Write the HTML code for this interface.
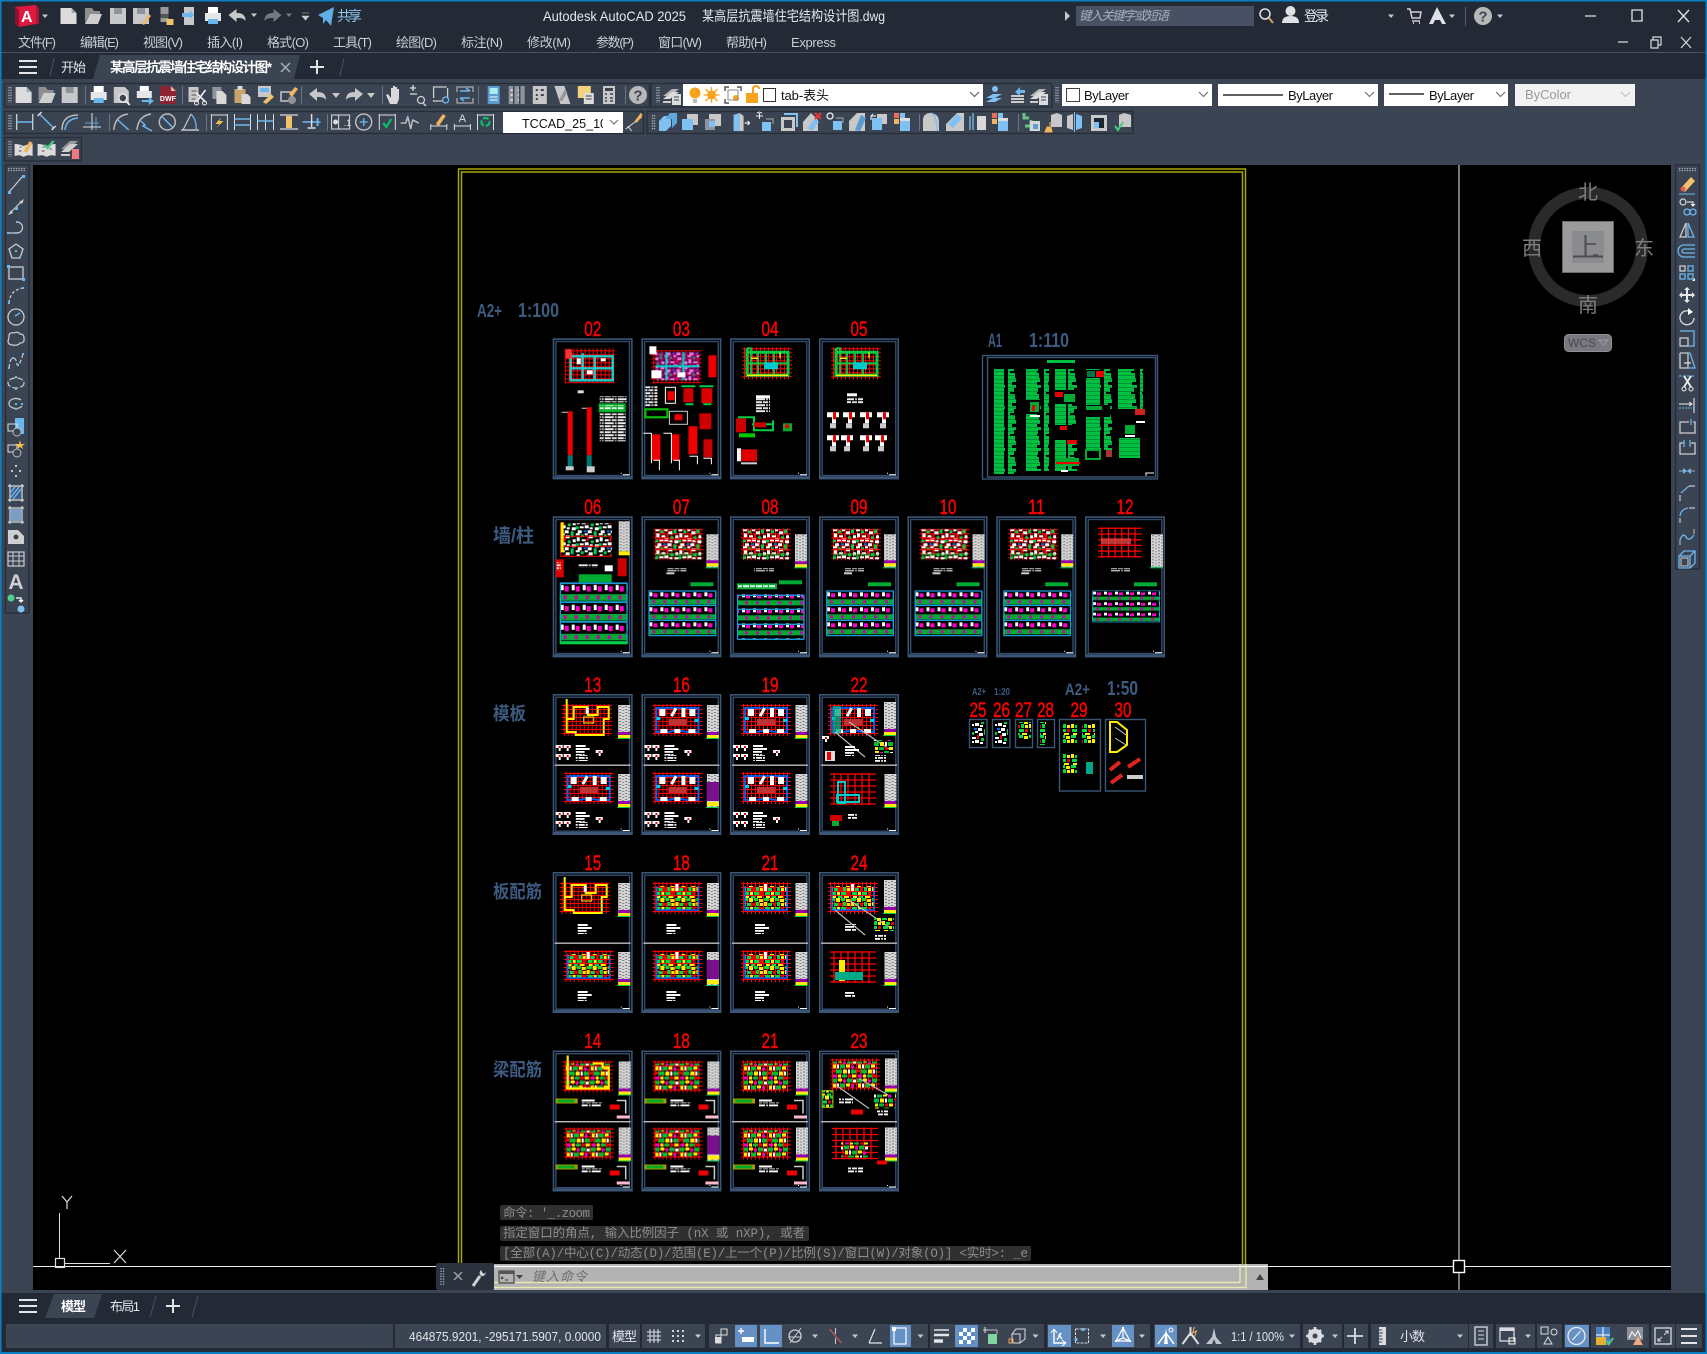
<!DOCTYPE html>
<html lang="zh"><head><meta charset="utf-8"><title>Autodesk AutoCAD 2025</title>
<style>
html,body{margin:0;padding:0;background:#000;width:1707px;height:1354px;overflow:hidden}
svg{display:block;font-family:"Liberation Sans","Noto Sans CJK SC",sans-serif}
.m{font-size:13px;fill:#c9ced6}
.t{font-size:14px;fill:#e4e6ea}
.r{font-size:21px;fill:#f00;stroke:#f00;stroke-width:.45;text-anchor:middle;font-family:"Liberation Sans",sans-serif}
.b{fill:#3d5b80;font-weight:bold}
.c{font-size:13px;fill:#111;font-family:"Liberation Sans","Noto Sans CJK SC",sans-serif}
.h{font-size:12.5px;fill:#8c8c8c;font-family:"Liberation Mono","Noto Sans CJK SC",monospace}
.v{font-size:20px;fill:#7e7e7e;text-anchor:middle}
.st{font-size:13px;fill:#e2e4e8}
</style></head><body>
<svg xmlns="http://www.w3.org/2000/svg" width="1707" height="1354" viewBox="0 0 1707 1354">
<defs>
<pattern id="rg" width="4" height="4" patternUnits="userSpaceOnUse"><path d="M0 .5H4M.5 0V4" stroke="#f00" fill="none"/></pattern>
<pattern id="nD" width="23" height="17" patternUnits="userSpaceOnUse"><g fill="#fff"><rect width="4" height="2"/><rect x="9" width="3" height="2"/><rect x="13" y="2" width="4" height="3"/><rect x="1" y="4" width="3" height="4"/><rect x="6" y="6" width="4" height="2"/><rect x="20" y="6" width="3" height="3"/><rect x="4" y="10" width="4" height="2"/><rect x="9" y="9" width="4" height="3"/><rect x="14" y="11" width="3" height="2"/><rect x="19" y="11" width="4" height="3"/><rect x="2" y="14" width="4" height="3"/><rect x="12" y="14" width="4" height="3"/></g><g fill="#0c4"><rect x="5" y="1" width="3" height="3"/><rect x="18" width="3" height="4"/><rect x="15" y="7" width="3" height="3"/><rect y="10" width="3" height="3"/><rect x="18" y="15" width="3" height="2"/></g><rect x="11" y="4" width="2" height="4" fill="#f00"/><rect x="8" y="14" width="3" height="2" fill="#06f"/></pattern>
<pattern id="nG" width="21" height="15" patternUnits="userSpaceOnUse"><g fill="#0d4"><rect width="5" height="3"/><rect x="11" width="4" height="3"/><rect x="4" y="5" width="4" height="3"/><rect x="13" y="4" width="3" height="4"/><rect x="1" y="9" width="5" height="3"/><rect x="11" y="9" width="5" height="3"/><rect x="8" y="13" width="4" height="2"/></g><g fill="#fe0"><rect x="6" width="4" height="4"/><rect x="16" y="1" width="4" height="3"/><rect y="4" width="3" height="4"/><rect x="17" y="5" width="3" height="3"/><rect x="7" y="9" width="3" height="3"/><rect x="2" y="13" width="4" height="2"/><rect x="14" y="13" width="5" height="2"/></g><g fill="#e00"><rect x="9" y="5" width="3" height="3"/><rect x="17" y="9" width="3" height="3"/></g></pattern>
<pattern id="nH" width="25" height="19" patternUnits="userSpaceOnUse"><g fill="#0b3"><rect width="5" height="4"/><rect x="15" width="5" height="4"/><rect x="8" y="5" width="5" height="4"/><rect x="4" y="10" width="6" height="4"/><rect x="19" y="10" width="5" height="4"/><rect x="10" y="15" width="5" height="3"/></g><g fill="#fe0"><rect x="6" width="4" height="3"/><rect x="1" y="5" width="3" height="4"/><rect x="14" y="5" width="4" height="3"/><rect x="11" y="10" width="4" height="4"/><rect x="6" y="15" width="3" height="3"/><rect x="20" y="15" width="4" height="3"/></g><g fill="#e0c"><rect x="11" y="1" width="3" height="3"/><rect x="19" y="6" width="3" height="3"/><rect x="1" y="15" width="4" height="3"/></g><g fill="#fff"><rect x="21" y="1" width="3" height="3"/><rect x="5" y="5" width="2" height="4"/><rect x="16" y="10" width="2" height="4"/></g><g fill="#e00"><rect y="10" width="4" height="2"/><rect x="16" y="15" width="3" height="3"/></g></pattern>
<pattern id="nT" width="11" height="15" patternUnits="userSpaceOnUse"><rect y="9" width="11" height="5" fill="#0a3"/><rect x="1" y="2" width="3" height="4" fill="#fff"/><rect x="5" y="3" width="4" height="4" fill="#f0c"/><rect x="4" y="10" width="3" height="3" fill="#c0a"/></pattern>
<pattern id="nA" width="16" height="4" patternUnits="userSpaceOnUse"><rect width="16" height="3.4" fill="#00c040"/><rect y="3.4" width="16" height=".6" fill="#00903a"/></pattern>
<pattern id="nAe" width="12" height="21" patternUnits="userSpaceOnUse"><g fill="#000"><rect x="8" y="0" width="4" height="4"/><rect x="4" y="4" width="8" height="3"/><rect x="9" y="7" width="3" height="3"/><rect x="6" y="10" width="6" height="4"/><rect x="2" y="14" width="10" height="2"/><rect x="7" y="16" width="5" height="5"/></g></pattern>
<pattern id="nL" width="6" height="3" patternUnits="userSpaceOnUse"><rect width="6" height="3" fill="#d6d6d6"/><rect x="1" y="1" width="2" height="1" fill="#777"/><rect x="4" y="2" width="2" height="1" fill="#888"/></pattern>
<pattern id="nW" width="13" height="6" patternUnits="userSpaceOnUse"><rect width="9" height="1.800" fill="#fff"/><rect x="10" width="2" height="1.800" fill="#ccc"/><rect y="3" width="6" height="1.800" fill="#fff"/><rect x="7" y="3" width="5" height="1.800" fill="#eee"/></pattern>

<g id="fr"><rect x=".8" y=".8" width="78.400" height="139.400" fill="none" stroke="#3a5575" stroke-width="1.600"/><rect x="3.200" y="3.200" width="73.600" height="134" fill="none" stroke="#324d6c" stroke-width="1.400"/><rect y="138" width="80" height="3" fill="#3a5575"/><path d="M70 136.500h7M68 135h1" stroke="#fff"/></g>
<g id="lg"><rect width="12" height="33" fill="url(#nL)"/><rect y="27" width="12" height="3" fill="#90a"/><rect y="30" width="12" height="3" fill="#fe0"/><rect x="-1" y="33" width="13" height="1" fill="#0c4"/></g>
<g id="lgP"><rect width="12" height="33" fill="url(#nL)"/><rect y="8" width="12" height="19" fill="#7a0e8f"/><rect y="28" width="12" height="4" fill="#fe0"/><rect x="-1" y="33" width="13" height="1" fill="#0c4"/></g>
<g id="tx"><rect width="10" height="2" fill="#fff"/><rect y="3" width="14" height="2" fill="#fff"/><rect y="6" width="9" height="4" fill="url(#nW)"/></g>
<g id="dtl"><path d="M0 0h7v3H5v3H3V3H0z" fill="#fff"/><rect x="3" y="1" width="2" height="2" fill="#e00"/></g>
<g id="pbb"><rect x="-2" y="-1" width="50" height="32" fill="url(#rg)"/></g>
<g id="pD"><use href="#pbb"/><rect width="46" height="30" fill="url(#nD)"/><path d="M0 10H46M0 20H46" stroke="#f00"/><rect x="0" y="24" width="46" height="3" fill="#0c4" opacity=".4"/></g>
<g id="pE"><use href="#pbb"/><path d="M2 3H44V27H32l-4-1H18l-4 1H2z" fill="none" stroke="#06f" stroke-width="1.800"/><rect x="5" y="4" width="6" height="7" fill="#fff"/><rect x="18" y="3" width="3" height="9" fill="#fff" transform="rotate(30 20 7)"/><rect x="27" y="3" width="4" height="9" fill="#fff"/><rect x="35" y="4" width="6" height="7" fill="#fff"/><rect x="14" y="14" width="18" height="6" fill="#b33"/><rect x="6" y="24" width="7" height="4" fill="#fff"/><rect x="20" y="24" width="6" height="4" fill="#fff"/><rect x="34" y="24" width="7" height="4" fill="#fff"/><rect x="2" y="12" width="4" height="3" fill="#0ce"/><rect x="40" y="14" width="4" height="3" fill="#0ce"/></g>
<g id="pF"><use href="#pbb"/><path d="M3-6V27H12V30H40V14H45V2H34V10H24V2H10V14H4" fill="none" stroke="#fe0" stroke-width="2"/><rect x="20" y="12" width="10" height="6" fill="none" stroke="#fe0"/><rect x="22" y="3" width="3" height="6" fill="#fff"/></g>
<g id="pG"><use href="#pbb"/><rect x="2" y="3" width="42" height="24" fill="url(#nG)"/><path d="M2 3v24h42V3" fill="none" stroke="#06f" stroke-width="1.500"/><rect x="21" y="1" width="3" height="7" fill="#fff"/></g>
<g id="pH"><use href="#pbb"/><rect x="1" y="2" width="44" height="26" fill="url(#nH)"/></g>
<g id="pHy"><use href="#pbb"/><rect x="1" y="2" width="44" height="26" fill="url(#nH)"/><path d="M3-6V27H44V6H38V2H28" fill="none" stroke="#fe0" stroke-width="2.200"/></g>
<g id="pC"><use href="#pbb"/><path d="M3 0V27H44V4H3" fill="none" stroke="#0c4" stroke-width="3"/><path d="M3 0h4v27M14 4V27M30 4V27M3 15H44M22 4V15" fill="none" stroke="#0c4" stroke-width="1.800"/><path d="M3 27H44M7 10H14M36 4V10" fill="none" stroke="#fe0" stroke-width="1.300"/><rect x="20" y="14" width="14" height="7" fill="#0cc"/></g>
<g id="pR"><path d="M0 0H46M0 6H46M0 12H46M0 18H46M0 24H46M0 30H46M4 -1V31M11 -1V31M18 -1V31M25 -1V31M32 -1V31M39 -1V31" stroke="#f00" stroke-width="1.300"/></g>
<g id="tbl"><rect width="68" height="46" fill="url(#nT)"/><path d="M.7.7H67.300V45.300H.7zM.7 15H67.300M.7 30H67.300" fill="none" stroke="#1a9ad8" stroke-width="1.300"/></g>

<g id="s02"><use href="#fr"/><rect x="12" y="10" width="50" height="35" fill="url(#rg)"/><path d="M18 15V42H60V18H18M30 15V42M42 18V42M18 30H60" fill="none" stroke="#2cc" stroke-width="2.400"/><rect x="24" y="20" width="4" height="6" fill="#fff"/><rect x="34" y="32" width="6" height="4" fill="#fff"/><rect x="48" y="20" width="5" height="3" fill="#fff"/><rect x="13" y="11" width="6" height="9" fill="#f33"/><rect x="25" y="52" width="6" height="3" fill="#ddd"/><path d="M9 74h8v40M29 70h8v44" fill="none" stroke="#ccc"/><rect x="15" y="73" width="5" height="44" fill="#e00"/><rect x="34" y="69" width="5" height="48" fill="#e00"/><rect x="15" y="117" width="5" height="12" fill="#077"/><rect x="34" y="117" width="5" height="12" fill="#077"/><rect x="46" y="65" width="27" height="9" fill="#0a2"/><rect x="47" y="67" width="24" height="5" fill="url(#nW)"/><rect x="47" y="58" width="27" height="6" fill="url(#nW)"/><rect x="47" y="75" width="26" height="28" fill="url(#nW)"/><rect x="13" y="128" width="8" height="4" fill="#ccc"/><rect x="34" y="128" width="8" height="6" fill="#ccc"/></g>
<g id="s03"><use href="#fr"/><rect x="10" y="12" width="50" height="33" fill="url(#rg)"/><rect x="14" y="14" width="44" height="28" fill="url(#nD)"/><rect x="14" y="14" width="44" height="28" fill="#a0a" opacity=".5"/><path d="M14 28H58M25 14V42M42 14V42" stroke="#0cc" stroke-width="2"/><rect x="8" y="8" width="7" height="8" fill="#fff"/><rect x="10" y="32" width="10" height="8" fill="#fff"/><rect x="36" y="34" width="8" height="5" fill="#fff"/><rect x="67" y="17" width="8" height="22" fill="#e00"/><rect x="4" y="48" width="12" height="20" fill="url(#nW)"/><rect x="24" y="49" width="10" height="16" fill="none" stroke="#fff"/><rect x="26" y="53" width="7" height="9" fill="#e00"/><rect x="42" y="50" width="10" height="14" fill="#c00"/><rect x="60" y="50" width="11" height="15" fill="#d00"/><path d="M40 48h14M58 48h14M44 66h8M62 66h8" stroke="#0c4" stroke-width="2"/><rect x="4" y="71" width="22" height="8" fill="none" stroke="#0c0" stroke-width="2"/><rect x="28" y="73" width="18" height="13" fill="none" stroke="#ccc"/><rect x="33" y="76" width="8" height="6" fill="#e00"/><rect x="58" y="75" width="12" height="16" fill="#c00"/><rect x="10" y="96" width="9" height="26" fill="#e00"/><rect x="30" y="96" width="8" height="26" fill="#e00"/><rect x="47" y="88" width="9" height="28" fill="#e00"/><rect x="62" y="101" width="9" height="18" fill="#c00"/><path d="M2 95h8v30M22 95h8v30M12 122h6v10M32 122h6v10M48 118h8v8M62 120h8v6" fill="none" stroke="#fff"/></g>
<g id="s04"><use href="#fr"/><use href="#pC" transform="translate(14 10)"/><rect x="26" y="57" width="14" height="3" fill="#fff"/><rect x="26" y="60" width="14" height="14" fill="url(#nW)"/><rect x="6" y="80" width="10" height="14" fill="#c00"/><path d="M8 79h16v13H43V82M22 86H43" fill="none" stroke="#0c4" stroke-width="2"/><rect x="24" y="84" width="12" height="5" fill="#c00"/><rect x="9" y="95" width="16" height="4" fill="#0c0"/><rect x="53" y="85" width="9" height="8" fill="#0a3"/><rect x="55" y="86" width="4" height="4" fill="#e00"/><rect x="11" y="111" width="16" height="12" fill="#d00"/><rect x="7" y="110" width="4" height="13" fill="#fff"/><rect x="11" y="124" width="16" height="2" fill="#ccc"/></g>
<g id="s05"><use href="#fr"/><use href="#pC" transform="translate(14 10)"/><rect x="28" y="55" width="10" height="3" fill="#fff"/><rect x="28" y="59" width="16" height="6" fill="url(#nW)"/><use href="#dd5" x="8" y="74"/><use href="#dd5" x="24" y="74"/><use href="#dd5" x="41" y="74"/><use href="#dd5" x="58" y="74"/><use href="#dd5" x="8" y="97"/><use href="#dd5" x="22" y="97"/><use href="#dd5" x="41" y="97"/><use href="#dd5" x="56" y="97"/></g>
<g id="dd5"><path d="M0 0h12v5H9v6H5V5H0z" fill="#fff"/><rect x="6" y="0" width="3" height="7" fill="#e00"/><rect x="3" y="11" width="6" height="5" fill="#ccc"/></g>
<g id="s06"><use href="#fr"/><rect x="8" y="7" width="51" height="33" fill="url(#nD)"/><path d="M8 7v33h51M8 20H59M8 30H59" fill="none" stroke="#f00"/><rect x="8" y="6" width="3" height="30" fill="#fe0"/><rect x="66" y="5" width="11" height="30" fill="url(#nL)"/><rect x="66" y="35" width="11" height="4" fill="#fe0"/><rect x="3" y="43" width="8" height="18" fill="#d00"/><rect x="4" y="46" width="4" height="8" fill="url(#nW)"/><rect x="65" y="42" width="9" height="18" fill="#c00"/><rect x="52" y="49" width="8" height="6" fill="#fff"/><rect x="25" y="48" width="20" height="3" fill="url(#nW)"/><rect x="26" y="58" width="33" height="8" fill="#0a3"/><use href="#tbl" transform="translate(7 66) scale(1 1.320)"/><rect x="7" y="125" width="68" height="3" fill="#0c4"/></g>
<g id="sW"><use href="#fr"/><use href="#pD" transform="translate(14 13)"/><rect x="65" y="18" width="12" height="33" fill="url(#nL)"/><rect x="65" y="44" width="12" height="3" fill="#90a"/><rect x="65" y="47" width="12" height="3" fill="#fe0"/><rect x="64" y="51" width="13" height="1" fill="#0c4"/><rect x="25" y="52" width="20" height="3" fill="url(#nW)"/><rect x="25" y="56" width="8" height="2" fill="#ccc"/><rect x="49" y="66" width="23" height="4" fill="#0a3"/><use href="#tbl" transform="translate(7 74)"/></g>
<g id="s08"><use href="#fr"/><use href="#pD" transform="translate(13 13)"/><use href="#lg" transform="translate(65 18)"/><rect x="24" y="52" width="20" height="3" fill="url(#nW)"/><rect x="49" y="64" width="23" height="4" fill="#0a3"/><rect x="7" y="67" width="40" height="6" fill="#0a3"/><rect x="8" y="68" width="38" height="4" fill="url(#nW)"/><rect x="7" y="78" width="67" height="45" fill="url(#nT)"/><path d="M7.500 79H74M7.500 93H74M7.500 108H74M7.500 123H74M7.500 79V123M74 79V123" fill="none" stroke="#1a9ad8" stroke-width="1.300"/></g>
<g id="s12"><use href="#fr"/><use href="#pR" transform="translate(13 12) scale(.95)"/><rect x="16" y="22" width="30" height="6" fill="#d44" opacity=".8"/><rect x="66" y="18" width="12" height="33" fill="url(#nL)"/><rect x="65" y="51" width="13" height="1" fill="#0c4"/><rect x="25" y="52" width="20" height="3" fill="url(#nW)"/><rect x="49" y="66" width="23" height="4" fill="#0a3"/><g transform="translate(7 74) scale(1 .7)"><rect width="68" height="46" fill="url(#nT)"/><path d="M.7.7H67.300V45.300H.7z" fill="none" stroke="#1a9ad8"/></g></g>
<g id="dvd"><rect x="2" y="70.500" width="76" height="1.400" fill="#bbb"/></g>
<g id="ds"><use href="#dtl" x="3" y="51"/><use href="#dtl" x="11" y="51"/><use href="#dtl" x="3" y="60"/><use href="#dtl" x="11" y="60"/><use href="#tx" x="23" y="51"/><rect x="23" y="61" width="12" height="6" fill="url(#nW)"/><use href="#dtl" x="43" y="56"/></g>
<g id="sT1"><use href="#fr"/><use href="#pF" transform="translate(11 11)"/><use href="#lg" transform="translate(65.500 11)"/><use href="#ds"/><use href="#dvd"/><use href="#pE" transform="translate(13 79)"/><use href="#lg" transform="translate(65.500 80)"/><use href="#ds" y="67"/></g>
<g id="sT2"><use href="#fr"/><use href="#pE" transform="translate(13 11)"/><use href="#lg" transform="translate(65.500 11)"/><use href="#ds"/><use href="#dvd"/><use href="#pE" transform="translate(13 79)"/><use href="#lgP" transform="translate(65.500 80)"/><use href="#ds" y="67"/></g>
<g id="sT3"><use href="#fr"/><use href="#pE" transform="translate(13 11)"/><use href="#lg" transform="translate(65.500 11)"/><use href="#ds"/><use href="#dvd"/><use href="#pE" transform="translate(13 79)"/><use href="#lg" transform="translate(65.500 80)"/><use href="#ds" y="67"/></g>
<g id="sT4"><use href="#fr"/><use href="#pE" transform="translate(11 11)"/><rect x="14" y="12" width="8" height="28" fill="#0a8" opacity=".8"/><use href="#lg" transform="translate(65 8)"/><path d="M16 38L46 63M30 28L70 55" stroke="#bbb" stroke-width="1.200"/><rect x="55" y="46" width="20" height="13" fill="url(#nH)"/><use href="#dtl" x="3" y="42"/><rect x="6" y="57" width="10" height="10" fill="#ddd"/><rect x="8" y="58" width="4" height="8" fill="#e00"/><use href="#tx" x="26" y="52"/><rect x="56" y="61" width="11" height="7" fill="url(#nW)"/><use href="#dvd"/><use href="#pR" transform="translate(11 80)"/><rect x="19" y="88" width="7" height="21" fill="none" stroke="#0cc" stroke-width="2"/><rect x="18" y="101" width="22" height="7" fill="none" stroke="#0cc" stroke-width="2"/><use href="#lg" transform="translate(65.500 80)"/><rect x="11" y="121" width="12" height="6" fill="#c00"/><rect x="13" y="127" width="7" height="5" fill="#0a3"/><rect x="29" y="119" width="9" height="6" fill="url(#nW)"/></g>
<g id="dr"><use href="#tx" x="25" y="52"/></g>
<g id="sS1"><use href="#fr"/><use href="#pF" transform="translate(9 11)"/><use href="#lg" transform="translate(65.500 11)"/><use href="#dr"/><use href="#dvd"/><use href="#pG" transform="translate(13 79)"/><use href="#lg" transform="translate(65.500 80)"/><use href="#dr" y="67"/></g>
<g id="sS2"><use href="#fr"/><use href="#pG" transform="translate(13 11)"/><use href="#lg" transform="translate(65.500 11)"/><use href="#dr"/><use href="#dvd"/><use href="#pG" transform="translate(13 79)"/><use href="#lgP" transform="translate(65.500 80)"/><use href="#dr" y="67"/></g>
<g id="sS3"><use href="#fr"/><use href="#pG" transform="translate(13 11)"/><use href="#lg" transform="translate(65.500 11)"/><use href="#dr"/><use href="#dvd"/><use href="#pG" transform="translate(13 79)"/><use href="#lg" transform="translate(65.500 80)"/><use href="#dr" y="67"/></g>
<g id="sS4"><use href="#fr"/><use href="#pG" transform="translate(11 11)"/><use href="#lg" transform="translate(65 8)"/><path d="M16 38L46 63M30 28L70 55" stroke="#bbb" stroke-width="1.200"/><rect x="55" y="46" width="20" height="13" fill="url(#nG)"/><rect x="26" y="52" width="11" height="8" fill="url(#nW)"/><rect x="56" y="63" width="11" height="6" fill="url(#nW)"/><use href="#dvd"/><use href="#pR" transform="translate(11 80)"/><rect x="20" y="88" width="6" height="21" fill="#fe0"/><rect x="16" y="100" width="28" height="8" fill="#0a8"/><use href="#lg" transform="translate(65.500 80)"/><rect x="26" y="119" width="10" height="6" fill="url(#nW)"/></g>
<g id="bb"><rect x="3" y="48" width="22" height="5" fill="#a90"/><rect x="5" y="49" width="17" height="3" fill="#0a2"/><rect x="29" y="49" width="13" height="2" fill="#fff"/><rect x="29" y="52" width="20" height="5" fill="url(#nW)"/><rect x="57" y="54" width="10" height="5" fill="#e00"/><path d="M64 50h9v13" fill="none" stroke="#ccc" stroke-width="1.500"/><rect x="64" y="65" width="13" height="3" fill="#fbc"/></g>
<g id="sB1"><use href="#fr"/><use href="#pHy" transform="translate(12 11)"/><use href="#lg" transform="translate(66 11)"/><use href="#bb"/><use href="#dvd"/><use href="#pH" transform="translate(13 78)"/><use href="#lg" transform="translate(66 77)"/><use href="#bb" y="66"/></g>
<g id="sB2"><use href="#fr"/><use href="#pH" transform="translate(13 11)"/><use href="#lg" transform="translate(66 11)"/><use href="#bb"/><use href="#dvd"/><use href="#pH" transform="translate(13 78)"/><use href="#lgP" transform="translate(66 77)"/><use href="#bb" y="66"/></g>
<g id="sB3"><use href="#fr"/><use href="#pH" transform="translate(13 11)"/><use href="#lg" transform="translate(66 11)"/><use href="#bb"/><use href="#dvd"/><use href="#pH" transform="translate(13 78)"/><use href="#lg" transform="translate(66 77)"/><use href="#bb" y="66"/></g>
<g id="sB4"><use href="#fr"/><use href="#pH" transform="translate(13 9)"/><use href="#lg" transform="translate(66 8)"/><path d="M16 34L50 58M40 28L70 45" stroke="#bbb" stroke-width="1.200"/><rect x="55" y="44" width="22" height="14" fill="url(#nH)"/><rect x="3" y="40" width="11" height="17" fill="url(#nG)"/><rect x="3" y="40" width="11" height="17" fill="none" stroke="#a90"/><rect x="20" y="47" width="14" height="7" fill="url(#nW)"/><rect x="32" y="59" width="12" height="5" fill="#e00"/><rect x="58" y="60" width="11" height="6" fill="url(#nW)"/><use href="#dvd"/><use href="#pR" transform="translate(13 78)"/><rect x="22" y="92" width="28" height="15" fill="url(#nH)"/><use href="#lg" transform="translate(66 77)"/><rect x="29" y="116" width="15" height="6" fill="url(#nW)"/><rect x="58" y="110" width="10" height="4" fill="#e00"/></g>

<g id="n"><path d="M-8-8H3l5 5V8H-8z" fill="#dcdcdc"/><path d="M3-8v5h5" fill="#9aa" /></g>
<g id="o"><path d="M-8 7V-8h7l2 3H7v3H-3z" fill="#8f8f8f"/><path d="M-8 8l5-10H9L5 8z" fill="#cfcfcf"/></g>
<g id="s"><path d="M-8-8H8V8H-8z" fill="#c8c8c8"/><rect x="-4" y="-8" width="8" height="6" fill="#8f949c"/><rect x="-4" y="2" width="8" height="6" fill="#fff"/><rect x="-4" y="2" width="8" height="6" fill="#3b4453" opacity=".3"/></g>
<g id="sa"><use href="#s"/><path d="M1 8L8-2l2 2L3 9z" fill="#f2b45c"/></g>
<g id="pr"><rect x="-5" y="-9" width="10" height="6" fill="#fff"/><rect x="-8" y="-3" width="16" height="8" fill="#e6e6e6"/><rect x="-5" y="3" width="10" height="5" fill="#6cb6ee"/></g>
<g id="pv"><path d="M-8-8H3l4 4V8H-8z" fill="#c8c8c8"/><circle cx="1" cy="3" r="4" fill="#3b4453" stroke="#e6e6e6" stroke-width="1.500"/><path d="M4 6l4 4" stroke="#e6e6e6" stroke-width="1.800"/></g>
<g id="pl"><rect x="-5" y="-9" width="9" height="5" fill="#fff"/><rect x="-8" y="-4" width="15" height="7" fill="#e6e6e6"/><path d="M-3 5H4V2l5 4-5 4V7H-3z" fill="#6cb6ee"/></g>
<g id="dwf"><path d="M-8-9H3l5 5V9H-8z" fill="#8c2332"/><path d="M3-9v5h5" fill="#eaa"/><text x="0" y="6" font-size="7" fill="#fff" text-anchor="middle" font-weight="bold">DWF</text></g>
<g id="cut"><rect x="-9" y="-8" width="10" height="15" fill="#c8c8c8"/><path d="M-6-4h5M-6 0h5M-6 4h4" stroke="#555"/><path d="M-1-2L8 7M8-5L-1 7" stroke="#eee" stroke-width="1.600"/><circle cx="-1" cy="8" r="2" fill="none" stroke="#eee"/><circle cx="7" cy="8" r="2" fill="none" stroke="#eee"/></g>
<g id="cp"><rect x="-7" y="-8" width="9" height="12" fill="#8f949c"/><path d="M-3-4H3l4 4V9H-3z" fill="#d8d8d8"/></g>
<g id="pa"><rect x="-8" y="-6" width="11" height="14" fill="#c9a26a"/><rect x="-5" y="-9" width="5" height="4" fill="#d8d8d8"/><path d="M-1-1H5L8 2V9H-1z" fill="#d8d8d8"/></g>
<g id="mt"><rect x="-8" y="-9" width="13" height="11" fill="#c8c8c8"/><rect x="-6" y="-7" width="9" height="4" fill="#6cb6ee"/><path d="M-3 7L5-1l3 3L0 9z" fill="#f2c26a"/></g>
<g id="bl"><rect x="-8" y="-3" width="11" height="9" fill="none" stroke="#c8c8c8" stroke-width="1.500"/><circle cx="3" cy="5" r="4" fill="#8f949c"/><path d="M0-1L6-8l3 2L3 2z" fill="#f2b45c"/></g>
<g id="un"><path d="M-9-1l8-6v4c6 0 9 2 9 8-2-3-5-3-9-3v4z" fill="#c8c8c8"/></g>
<g id="rd"><path d="M9-1L1-7v4c-6 0-9 2-9 8 2-3 5-3 9-3v4z" fill="#c8c8c8"/></g>
<g id="tri"><path d="M-4-2H4L0 3z" fill="#c8c8c8"/></g>
<g id="trs"><path d="M-3-1.500H3L0 2z" fill="#c8c8c8"/></g>
<g id="hnd"><path d="M-5 9L-9 0l2-1 3 4V-7h2V-2V-9h2v7V-8h2V-2V-6h2V4l-2 5z" fill="#d8d8d8"/></g>
<g id="zr"><path d="M-8-7H-2M-5-10V-4M-8-1h7" stroke="#ddd" stroke-width="1.300"/><circle cx="3" cy="5" r="3.500" fill="none" stroke="#ccc" stroke-width="1.300"/><path d="M5 8l3 3" stroke="#ccc" stroke-width="1.500"/></g>
<g id="zw"><rect x="-8" y="-8" width="14" height="14" fill="none" stroke="#ccc" stroke-width="1.300" stroke-dasharray="13 2"/><circle cx="4" cy="5" r="3" fill="#3b4453" stroke="#6cb6ee" stroke-width="1.300"/></g>
<g id="zp"><path d="M-8-3V-8H8V-3M-8 3V8H8V3" fill="none" stroke="#aaa" stroke-width="1.300"/><path d="M-5-4H5M5-4L1-7M5 3H-5M-5 3L-1 6" stroke="#6cb6ee" stroke-width="1.500" fill="none"/></g>
<g id="pro"><rect x="-6" y="-9" width="12" height="18" fill="#5b9bd0"/><rect x="-4" y="-7" width="8" height="6" fill="#aee"/><path d="M-4 2H4M-4 5H4" stroke="#fff"/></g>
<g id="tp"><rect x="-8" y="-9" width="16" height="18" fill="#8f949c"/><path d="M-3-9V9M3-9V9" stroke="#3b4453" stroke-width="1.500"/><path d="M-6-5h2M1-5h1M-6 0h2M1 0h1M-6 5h2M1 5h1" stroke="#ddd" stroke-width="2"/></g>
<g id="sh"><rect x="-7" y="-9" width="14" height="18" fill="#c8c8c8"/><path d="M-4-5h2M1-5h3M-4 0h2M1 0h3M-4 4h2" stroke="#3b4453" stroke-width="2"/></g>
<g id="ms"><path d="M-8-9H2l6 18H-2z" fill="#c8c8c8"/><path d="M-4 6L2-5l3 2-5 9z" fill="#999"/></g>
<g id="mk"><rect x="-8" y="-9" width="13" height="12" fill="#f2d27a"/><rect x="-2" y="-2" width="10" height="11" fill="#ddd"/><path d="M0 1H6M0 4H6" stroke="#444"/></g>
<g id="cal"><rect x="-6" y="-9" width="12" height="18" fill="#c8c8c8"/><rect x="-4" y="-7" width="8" height="3" fill="#3b4453"/><path d="M-4-1h2M1-1h3M-4 3h2M1 3h3M-4 6h2M1 6h3" stroke="#3b4453" stroke-width="1.500"/></g>
<g id="q"><circle r="9" fill="#b8b8b8"/><text y="5.500" font-size="15" font-weight="bold" text-anchor="middle" fill="#3b4453">?</text></g>
<g id="lay"><path d="M-9 1L0-6 7-6-2 1z" fill="#b8b8b8"/><path d="M-9 4L0-3 7-3-2 4z" fill="#dcdcdc"/><path d="M-9 7H-1" stroke="#ccc" stroke-width="2"/><rect x="0" y="-1" width="9" height="11" fill="#dcdcdc"/><path d="M2 2h5M2 5h5" stroke="#3b4453"/></g>
<g id="bulb"><circle cy="-2" r="5.500" fill="#f7a41c"/><rect x="-2" y="4" width="4" height="4" fill="#bbb"/></g>
<g id="sun"><circle r="4.500" fill="#f7a41c"/><path d="M-8 0H8M0-8V8M-6-6L6 6M6-6L-6 6" stroke="#f7a41c" stroke-width="1.300"/></g>
<g id="vp"><path d="M-8-4V-8H-4M4-8H8V-4M-8 4V8H-4" fill="none" stroke="#555" stroke-width="1.500"/><circle cx="3" cy="3" r="3" fill="#f7a41c"/><rect x="-5" y="-5" width="10" height="10" fill="none" stroke="#888"/></g>
<g id="lck"><rect x="-6" y="-2" width="12" height="10" fill="#f7a41c"/><path d="M1-2V-6Q1-9 4-9T7-6" fill="none" stroke="#f7a41c" stroke-width="2"/></g>
<g id="lyb"><path d="M-8 7L-1 3 8 3 1 7zM-8 3L-1-1 8-1 1 3z" fill="#7fc1f2"/><circle cx="1" cy="-6" r="3" fill="#7fc1f2"/></g>
<g id="lyp"><path d="M-7 7H6M-7 4H6M-7 1H6" stroke="#ccc" stroke-width="2"/><path d="M-3-3L2-8V-5H7V-2H2V1z" fill="#6cb6ee"/></g>
<g id="dlin"><path d="M-8-8V8M8-8V8" stroke="#dcdcdc" stroke-width="1.200"/><path d="M-8 0H8" stroke="#6cb6ee" stroke-width="1.500"/></g>
<g id="dal"><path d="M-7-8L7 6" stroke="#6cb6ee" stroke-width="1.500"/><path d="M-9-6L-5-10M5 8L9 4" stroke="#ddd" stroke-width="1.500"/></g>
<g id="darc"><path d="M-8 8Q-8-7 8-7" fill="none" stroke="#ccc" stroke-width="1.300"/><path d="M-5 8Q-4-3 8-4" fill="none" stroke="#6cb6ee" stroke-width="1.500"/></g>
<g id="dor"><path d="M-9 5H9M0-9V8" stroke="#ddd" stroke-width="1"/><path d="M-7 1H7M4-5V8" stroke="#6cb6ee" stroke-width="1" opacity=".8"/></g>
<g id="drad"><path d="M-8 8Q-7-6 6-8" fill="none" stroke="#bbb" stroke-width="1.500"/><path d="M-4-2L7 8" stroke="#6cb6ee" stroke-width="1.500"/></g>
<g id="djog"><path d="M-8 8Q-7-6 6-8" fill="none" stroke="#bbb" stroke-width="1.500"/><path d="M-4-1L0 3-2 4 7 9" fill="none" stroke="#6cb6ee" stroke-width="1.500"/></g>
<g id="ddia"><circle r="8" fill="none" stroke="#bbb" stroke-width="1.500"/><path d="M-5-5L5 5" stroke="#6cb6ee" stroke-width="1.500"/></g>
<g id="dang"><path d="M-9 8H9" stroke="#ddd" stroke-width="1.300"/><path d="M-7 8L1-8" stroke="#ddd"/><path d="M1-8Q7-2 6 8" fill="none" stroke="#6cb6ee" stroke-width="1.300"/></g>
<g id="dqk"><path d="M-8-8V8M8-8V8M-8-7H8" stroke="#ddd"/><path d="M2-5L-4 2H0L-3 6 4-1H0z" fill="#f5c04a"/></g>
<g id="dbas"><path d="M-8-8V8M8-8V8" stroke="#ddd"/><path d="M-8-3H8M-8 3H8" stroke="#6cb6ee" stroke-width="1.500"/></g>
<g id="dcon"><path d="M-8-8V8M0-8V8M8-8V8" stroke="#ddd"/><path d="M-8-1H8" stroke="#6cb6ee" stroke-width="1.500"/></g>
<g id="dsp"><path d="M-9-7H9M-9 7H9" stroke="#ddd" stroke-width="1.300"/><rect x="-3" y="-6" width="6" height="12" fill="#f2c26a"/></g>
<g id="dbk"><path d="M-9 0H9" stroke="#6cb6ee" stroke-width="1.500"/><path d="M0-8V5M-4 6H4" stroke="#ddd" stroke-width="1.500"/><path d="M6-4V4" stroke="#6cb6ee" stroke-width="2"/></g>
<g id="dtol"><rect x="-9" y="-7" width="18" height="14" fill="none" stroke="#ddd"/><path d="M-2-7V7" stroke="#ddd"/><circle cx="-5" cy="0" r="2.500" fill="#ddd"/><text x="3" y="4" font-size="9" fill="#ddd">.1</text></g>
<g id="dcm"><circle r="8" fill="none" stroke="#ccc" stroke-width="1.300"/><path d="M-4 0H4M0-4V4" stroke="#6cb6ee" stroke-width="1.300"/></g>
<g id="din"><path d="M-8-8V8M8-8V8M-8-7H8" stroke="#ddd"/><path d="M-4 1L-1 5 4-3" fill="none" stroke="#0c6" stroke-width="2"/></g>
<g id="djl"><path d="M-9 1H-4L-2-6 1 7 3-2 9 1" fill="none" stroke="#ccc" stroke-width="1.300"/><path d="M-2-6V-1" stroke="#6cb6ee"/></g>
<g id="ded"><path d="M-8 8V2M8 8V2M-8 4H8" stroke="#ddd"/><path d="M-3 2L4-8l3 2L0 4z" fill="#f2b45c"/></g>
<g id="dA"><path d="M-8 8V2M8 8V2M-8 4H8" stroke="#ddd"/><text y="0" font-size="11" text-anchor="middle" fill="#ddd">A</text></g>
<g id="drg"><path d="M-8-8V8M8-8V8M-8-7H8" stroke="#ddd"/><circle r="4" fill="none" stroke="#0c6" stroke-width="2" stroke-dasharray="6 2"/></g>
<g id="dst"><path d="M-9 7L7-5" stroke="#ddd"/><path d="M0-1L6-9l2 2L2 1z" fill="#f2b45c"/><path d="M-7 4L-3 9" stroke="#ddd"/></g>
<g id="u3"><path d="M-9 9V-1L-4-6H3V4L-2 9z" fill="#7fc1f2"/><path d="M-3-3L2-9H9V1L4 6V-3z" fill="#5ea7e0"/></g>
<g id="u4"><rect x="-3" y="-8" width="11" height="11" fill="#c8c8c8"/><rect x="-8" y="-3" width="11" height="11" fill="#7fc1f2"/></g>
<g id="u5"><rect x="-4" y="-8" width="12" height="12" fill="#c8c8c8"/><rect x="-8" y="-3" width="10" height="11" fill="#8f949c"/><rect x="-4" y="-1" width="6" height="6" fill="#7fc1f2"/></g>
<g id="u6"><path d="M-8 9V-7L-2-9V9z" fill="#7fc1f2"/><path d="M-2-9L2-6V9H-2z" fill="#c8c8c8"/><path d="M3 1H8M6-1L8 1 6 3" stroke="#fff" fill="none"/></g>
<g id="u7"><path d="M-8-6H-1M-4.500-9V-3M-7-9L-4.500-10-2-9" stroke="#eee"/><rect x="-2" y="0" width="9" height="9" fill="#7fc1f2"/><path d="M2-3H9V2" fill="none" stroke="#aaa"/></g>
<g id="u8"><rect x="-7" y="-5" width="14" height="14" fill="#c8c8c8"/><rect x="-4" y="-2" width="8" height="8" fill="#3b4453"/><path d="M-4-8H9V5" fill="none" stroke="#7fc1f2" stroke-width="2"/></g>
<g id="u9"><path d="M-9 9V0L-1-9 6-2V9z" fill="#c8c8c8"/><path d="M-4 6L3-4 7 0 0 9z" fill="#7fc1f2"/><path d="M3-9L9-3M9-9L3-3" stroke="#e33" stroke-width="2"/></g>
<g id="u10"><circle cx="-5" cy="-6" r="3" fill="none" stroke="#eee" stroke-width="1.300"/><rect x="-2" y="-1" width="9" height="9" fill="#7fc1f2"/><path d="M1-4H8V1" fill="none" stroke="#aaa"/></g>
<g id="u11"><path d="M-9 9V-1L-1-9H7V9z" fill="#c8c8c8"/><path d="M-3 8L3-7 8-4 2 9z" fill="#5b9bd0"/></g>
<g id="u12"><rect x="-2" y="-8" width="10" height="10" fill="#c8c8c8"/><rect x="-7" y="-4" width="10" height="12" fill="#7fc1f2"/><path d="M-8-6H-3M-8-6L-6-8M-8-6V-2" stroke="#fff" fill="none"/></g>
<g id="u13"><rect x="-8" y="-9" width="5" height="5" fill="#ee6a5a"/><rect x="-2" y="-9" width="5" height="5" fill="#7fc1f2"/><rect x="-8" y="-3" width="5" height="5" fill="#f2b45c"/><rect x="-2" y="-2" width="10" height="11" fill="#7fc1f2"/><rect x="-2" y="-4" width="10" height="3" fill="#ddd"/></g>
<g id="u14"><path d="M-8 9V-3Q-7-9 0-9 8-8 8 0V9z" fill="#c8c8c8"/><path d="M0-9Q6-6 6 9" fill="none" stroke="#7fc1f2" stroke-width="1.500"/></g>
<g id="u15"><path d="M-9 9V2L2-9H9V9z" fill="#c8c8c8"/><path d="M-7 2L2-8 7-4-2 6z" fill="#7fc1f2"/></g>
<g id="u16"><rect x="-1" y="-6" width="9" height="14" fill="#d8d8d8"/><path d="M-8-6V8M-5-9V8" stroke="#7fc1f2" stroke-width="1.300"/></g>
<g id="u17"><path d="M-8-9V-4H-3M-7 4H-1V-2M-1 4V9" stroke="#6cc487" stroke-width="3" fill="none"/><rect x="-2" y="-1" width="10" height="10" fill="#d8d8d8"/><rect x="1" y="2" width="5" height="5" fill="#5b9bd0"/></g>
<g id="u18"><path d="M-2-7L4-9 9-7V5L-2 5z" fill="#c8c8c8"/><path d="M-3 0V4M-6 5L-2 5-1 10H-8z" fill="#f2b45c" stroke="#f2b45c"/></g>
<g id="u19"><path d="M-8-6L-2-8V8L-8 6z" fill="#c8c8c8"/><path d="M1-8L7-6V6L1 8z" fill="#7fc1f2"/><path d="M-0.500-10V10" stroke="#7fc1f2"/></g>
<g id="u20"><rect x="-8" y="-7" width="16" height="16" fill="#c8c8c8"/><rect x="-5" y="-4" width="10" height="10" fill="#1d2530"/><path d="M-5 6V0H0V6z" fill="#7fc1f2"/></g>
<g id="u21"><path d="M-4-7L1-9 8-7V5L-4 5z" fill="#c8c8c8"/><path d="M-8 4L-5 8 0 0" fill="none" stroke="#4c8" stroke-width="2"/></g>
<g id="edb"><path d="M-9 7V-5Q-4-5 0-3 4-5 9-5V7Q4 5 0 8-4 5-9 7z" fill="#dcdcdc"/><path d="M-4-2H-2M3 0H5M-5 2H-2" stroke="#555"/></g>
<g id="L1"><path d="M-7 8L7-8" stroke="#ccc" stroke-width="1.200"/><path d="M-8 7h3v3h-3zM6-9h3v3H6z" fill="#6cb6ee"/></g>
<g id="L2"><path d="M-6 6L6-6" stroke="#ccc" stroke-width="1.200"/><path d="M-8 8L-5 3-3 6zM8-8L3-5 6-3z" fill="#ccc"/><path d="M-1 0h3v3h-3z" fill="#6cb6ee"/></g>
<g id="L3"><path d="M-8 5H1A5 5 0 0 0 1-6" fill="none" stroke="#ccc" stroke-width="1.200"/><path d="M-9 4h2v2h-2zM-1 4h2v2h-2zM0-7h2v2H0z" fill="#6cb6ee"/></g>
<g id="L4"><path d="M0-7L7-2 4 7H-4L-7-2z" fill="none" stroke="#ccc" stroke-width="1.300"/><path d="M-1-1h2v2h-2zM3 5h2v2H3z" fill="#6cb6ee"/></g>
<g id="L5"><rect x="-7" y="-6" width="14" height="12" fill="none" stroke="#ccc" stroke-width="1.300"/><path d="M-9-8h3v3h-3zM6 5h3v3H6z" fill="#6cb6ee"/></g>
<g id="L6"><path d="M-7 8Q-6-5 7-7" fill="none" stroke="#ccc" stroke-width="1.300" stroke-dasharray="3 2"/><path d="M-8 7h2v2h-2zM6-8h2v2H6z" fill="#6cb6ee"/></g>
<g id="L7"><circle r="8" fill="none" stroke="#ccc" stroke-width="1.300"/><path d="M-1-1L4-4" stroke="#6cb6ee" stroke-width="1.500"/></g>
<g id="L8"><path d="M-7-3Q-7-7-2-6 2-8 4-5 8-5 8-1 9 4 4 4 2 7-3 6-8 6-8 2-7 0-7-3z" fill="none" stroke="#ccc" stroke-width="1.200"/></g>
<g id="L9"><path d="M-7 7Q-6-3-3-3T1 3 7-7" fill="none" stroke="#ccc" stroke-width="1.200" stroke-dasharray="4 2"/><path d="M-8 6h2v2h-2zM-4-4h2v2h-2zM1 3h2v2H1zM6-8h2v2H6z" fill="#6cb6ee"/></g>
<g id="L10"><ellipse rx="8" ry="5" fill="none" stroke="#ccc" stroke-width="1.200" stroke-dasharray="6 2"/><path d="M-1-7h2v2h-2zM-1 5h2v2h-2z" fill="#6cb6ee"/></g>
<g id="L11"><path d="M5-4A7 5 0 1 0 6 2" fill="none" stroke="#ccc" stroke-width="1.200"/><path d="M-1-1h2v2h-2zM5-1h2v2H5zM-1 4h2v2h-2z" fill="#6cb6ee"/></g>
<g id="L12"><rect x="-1" y="-9" width="9" height="16" fill="#6cb6ee"/><rect x="-8" y="-3" width="9" height="7" fill="none" stroke="#ddd"/><circle cx="1" cy="5" r="4" fill="#3b4453" stroke="#bbb"/></g>
<g id="L13"><rect x="-8" y="-3" width="9" height="7" fill="none" stroke="#ddd"/><circle cx="1" cy="5" r="4" fill="#3b4453" stroke="#bbb"/><path d="M4-8L5-4 9-4 6-2 7 1 4-1 1 1 2-2-1-4 3-4z" fill="#f5c04a"/></g>
<g id="L14"><path d="M-5-1h2v2h-2zM3-1h2v2H3zM-1-6h2v2h-2zM-1 4h2v2h-2z" fill="#c8c8c8"/></g>
<g id="L15"><path d="M-8-7H8M-8 7H8M-6-9V9M6-9V9" stroke="#ddd" stroke-width="1.200"/><rect x="-5" y="-6" width="10" height="12" fill="#3a5f88"/><path d="M-5 4L3-6M-3 6L5-4M-5-1L-1-6" stroke="#7fc1f2" stroke-width="1.200"/></g>
<g id="L16"><path d="M-8-7H8M-8 7H8M-6-9V9M6-9V9" stroke="#ddd" stroke-width="1.200"/><rect x="-5" y="-6" width="10" height="12" fill="#7b9fc4"/></g>
<g id="L17"><path d="M-8-7H2L8-1V7H-8z" fill="#d0d0d0"/><circle r="2.500" fill="#3b4453"/></g>
<g id="L18"><rect x="-8" y="-7" width="16" height="14" fill="none" stroke="#ccc" stroke-width="1.200"/><path d="M-8-3H8M-8 2H8M-3-7V7M3-7V7" stroke="#ccc"/></g>
<g id="L19"><text y="8" font-size="21" font-weight="bold" text-anchor="middle" fill="#cfcfcf">A</text></g>
<g id="L20"><circle cx="-5" cy="-5" r="3.500" fill="#4fd08a"/><circle cx="5" cy="6" r="3.500" fill="#7fc1f2"/><path d="M0-5H5V-1M3-3L5-1 7-3" stroke="#fff" fill="none" stroke-width="1.300"/></g>
<g id="R1"><path d="M-6 3L4-8 8-4-2 7z" fill="#f2c26a"/><circle cx="-4" cy="4" r="2.500" fill="#e85a4f"/><path d="M-8 9H8" stroke="#6cb6ee"/></g>
<g id="R2"><circle cx="-4" cy="-5" r="3" fill="none" stroke="#ddd" stroke-width="1.200"/><path d="M0-5H6V-1M4-3L6-1 8-3" stroke="#fff" fill="none"/><circle cx="0" cy="5" r="3" fill="none" stroke="#6cb6ee" stroke-width="1.300"/><circle cx="6" cy="5" r="3" fill="none" stroke="#6cb6ee" stroke-width="1.300"/></g>
<g id="R3"><path d="M-1-7V7H-7z" fill="none" stroke="#ccc" stroke-width="1.300"/><path d="M1-7V7H7z" fill="none" stroke="#6cb6ee" stroke-width="1.300"/></g>
<g id="R4"><path d="M8-6H-3A6 6 0 0 0-3 6H8M8-2H-3A2 2 0 0 0-3 2H8" fill="none" stroke="#6cb6ee" stroke-width="1.300"/></g>
<g id="R5"><rect x="-7" y="-7" width="5" height="5" fill="none" stroke="#ccc" stroke-width="1.300"/><rect x="1" y="-7" width="5" height="5" fill="none" stroke="#6cb6ee" stroke-width="1.300"/><rect x="-7" y="1" width="5" height="5" fill="none" stroke="#6cb6ee" stroke-width="1.300"/><rect x="1" y="1" width="5" height="5" fill="none" stroke="#6cb6ee" stroke-width="1.300"/><path d="M5 8l3-3v3z" fill="#fff"/></g>
<g id="R6"><path d="M0-8L3-5H1V-1H5V-3L8 0 5 3V1H1V5H3L0 8-3 5H-1V1H-5V3L-8 0-5-3V-1H-1V-5H-3z" fill="#e6e6e6"/></g>
<g id="R7"><path d="M4-5A7 7 0 1 0 7 1" fill="none" stroke="#ddd" stroke-width="1.300"/><path d="M1-9L6-5 1-2z" fill="#fff"/></g>
<g id="R8"><rect x="-7" y="-1" width="8" height="8" fill="none" stroke="#ccc" stroke-width="1.300"/><path d="M-7-8H7V7H1" fill="none" stroke="#6cb6ee" stroke-width="1.300"/></g>
<g id="R9"><path d="M-7-8V7H1V-8H-7" fill="none" stroke="#ccc" stroke-width="1.300"/><path d="M1-8H3L8 7H1" fill="none" stroke="#6cb6ee" stroke-width="1.300"/><path d="M-3 2H4" stroke="#fff"/></g>
<g id="R10"><path d="M-8-7H8" stroke="#6cb6ee" stroke-dasharray="3 1"/><path d="M-3-7L4 4M4-7L-3 4" stroke="#eee" stroke-width="1.800"/><circle cx="-3" cy="6" r="2" fill="none" stroke="#eee"/><circle cx="4" cy="6" r="2" fill="none" stroke="#eee"/></g>
<g id="R11"><path d="M7-7V8" stroke="#ccc" stroke-width="1.300"/><path d="M-8-1H5M2-3L5-1 2 1" stroke="#eee" fill="none"/><path d="M-8 3H5" stroke="#6cb6ee" stroke-dasharray="2 1"/></g>
<g id="R12"><path d="M2-5H-7V6H8V-5H6" fill="none" stroke="#ccc" stroke-width="1.300"/><path d="M4-8V-2" stroke="#6cb6ee" stroke-width="1.300"/></g>
<g id="R13"><path d="M-3-5H-7V6H8V-5H4" fill="none" stroke="#ccc" stroke-width="1.300"/><path d="M-3-8V-1M3-8V-1" stroke="#6cb6ee" stroke-width="1.300"/></g>
<g id="R14"><path d="M-8 0H8" stroke="#aaa"/><path d="M-4-3L0 0-4 3zM4-3L0 0 4 3z" fill="#6cb6ee"/></g>
<g id="R15"><path d="M-7 8V2" stroke="#ccc" stroke-width="1.200"/><path d="M2-7H8" stroke="#ccc" stroke-width="1.200"/><path d="M-6 0L2-7" stroke="#6cb6ee" stroke-width="1.200"/></g>
<g id="R16"><path d="M-7 8V3" stroke="#ccc" stroke-width="1.200"/><path d="M-7 1Q-6-6 1-7" fill="none" stroke="#6cb6ee" stroke-width="1.300"/><path d="M2-7H8" stroke="#ccc" stroke-width="1.200"/></g>
<g id="R17"><path d="M-7 8V3M7-8V-3" stroke="#aaa" stroke-width="1.200"/><path d="M-7 3Q-4-5-1 0T7-2" fill="none" stroke="#6cb6ee" stroke-width="1.300"/></g>
<g id="R18"><path d="M-8-3V9H3V-3zM-8-3L-3-8H8V4L3 9M3-3L8-8" fill="none" stroke="#6cb6ee" stroke-width="1.300"/><rect x="-6" y="-1" width="7" height="8" fill="none" stroke="#ccc"/></g>
<g id="sg"><path d="M-7-4H7M-7 0H7M-7 4H7M-4-7V7M0-7V7M4-7V7" stroke="#e2e4e8"/></g>
<g id="sd"><path d="M-5-5h2v2h-2zM0-5h2v2H0zM5-5h2v2H5zM-5 0h2v2h-2zM0 0h2v2H0zM5 0h2v2H5zM-5 5h2v2h-2zM0 5h2v2H0zM5 5h2v2H5z" fill="#d0d3da"/></g>
<g id="sI"><path d="M0-7H6V-1H0zM0-1H-5V7H0z" fill="none" stroke="#ddd"/><rect x="-6" y="1" width="6" height="6" fill="#ddd"/></g>
<g id="sS"><path d="M-8-5H-2M-5-8V-2" stroke="#fff" stroke-width="1.400"/><rect x="-4" y="1" width="12" height="5" fill="#fff"/></g>
<g id="sO"><path d="M-6-7V7H8" fill="none" stroke="#fff" stroke-width="1.400"/></g>
<g id="sP"><circle r="6" fill="none" stroke="#ccc" stroke-width="1.300"/><path d="M-5 7L6-8M-6 1H6" stroke="#ccc"/></g>
<g id="sIs"><path d="M-6-7L6 7" stroke="#e05a5a"/><path d="M0-8V-2M0 2V8" stroke="#ccc"/></g>
<g id="sAn"><path d="M-7 7L-1-7M-7 7H6" stroke="#e2e4e8" stroke-width="1.200"/></g>
<g id="sOs"><rect x="-6" y="-8" width="12" height="16" fill="none" stroke="#fff" stroke-width="1.200"/><rect x="-8" y="-9" width="4" height="4" fill="#fff"/></g>
<g id="sLw"><path d="M-7-6H8" stroke="#e2e4e8" stroke-width="1.500"/><path d="M-7-1H8" stroke="#e2e4e8" stroke-width="2.500"/><path d="M-7 5H2" stroke="#e2e4e8" stroke-width="3.500"/></g>
<g id="sTr"><rect x="-8" y="-8" width="16" height="16" fill="#fff"/><path d="M-8-8h4v4h-4zM0-8h4v4H0zM-4-4h4v4h-4zM4-4h4v4H4zM-8 0h4v4h-4zM0 0h4v4H0zM-4 4h4v4h-4zM4 4h4v4H4z" fill="#5b8fc4"/></g>
<g id="sC"><path d="M-8-6H-3M-6-9V-3" stroke="#ddd"/><rect x="-3" y="-2" width="9" height="10" fill="#7fd6a0"/><path d="M-3-6H6V-2" fill="none" stroke="#bbb"/></g>
<g id="s3"><path d="M-5-2L-1-7H8V3L3 7V-2H-5" fill="none" stroke="#ddd"/><path d="M-5-2V7H3" fill="none" stroke="#ddd"/><rect x="-8" y="3" width="4" height="4" fill="none" stroke="#f2a45c"/></g>
<g id="sU"><path d="M-5-7V7H7" fill="none" stroke="#fff" stroke-width="1.400"/><path d="M-5-7L-8-3M-5-7L-2-3M7 7L3 4M7 7L3 10" stroke="#fff"/><path d="M-2 4L2-3 0-1 3 3" fill="none" stroke="#fff" stroke-width="1.300"/></g>
<g id="sD"><rect x="-7" y="-7" width="13" height="14" fill="none" stroke="#cfd2d9" stroke-dasharray="3 1"/><path d="M-8 2h3v3h-3zM-1-8h3v3h-3z" fill="#6cb6ee"/></g>
<g id="sG"><path d="M0-8L7 5H-7zM0-8V2M-7 5L0 2 7 5" fill="none" stroke="#fff" stroke-width="1.200"/><path d="M-1-9h2v2h-2zM-8 4h2v2h-2zM6 4h2v2H6z" fill="#fff"/></g>
<g id="sAa"><path d="M-2 8L0-8 2 8z" fill="#fff"/><path d="M-8 8L0-3 8 8" stroke="#fff" fill="none" stroke-width="1.500"/><circle cx="5" cy="-6" r="2" fill="none" stroke="#fff"/></g>
<g id="sAb"><path d="M-8 8L0-3 8 8" stroke="#ddd" fill="none" stroke-width="2"/><path d="M0-9L0 0" stroke="#ddd" stroke-width="2"/><path d="M4-9L2-3 6-5 4 1" stroke="#f2b45c" fill="none"/></g>
<g id="sAc"><path d="M0-8L2 1 8 8H2L0 3-2 8H-8L-2 1z" fill="#bfc3ca"/></g>
<g id="sGe"><circle r="5.500" fill="none" stroke="#d9dbe0" stroke-width="3.500"/><path d="M0-9V9M-9 0H9M-6-6L6 6M6-6L-6 6" stroke="#d9dbe0" stroke-width="2.500"/><circle r="2.500" fill="#3b4453"/></g>
<g id="sRu"><rect x="-4" y="-9" width="7" height="18" fill="#d9dbe0"/><path d="M-4-6H-1M-4-3H0M-4 0H-1M-4 3H0M-4 6H-1" stroke="#3b4453"/></g>
<g id="sQp"><rect x="-6" y="-9" width="12" height="18" fill="none" stroke="#d9dbe0" stroke-width="1.300"/><path d="M-3-5H3M-3-1H3M-3 3H3" stroke="#d9dbe0"/></g>
<g id="sWs"><rect x="-7" y="-8" width="14" height="13" fill="none" stroke="#d9dbe0" stroke-width="1.300"/><rect x="-7" y="-8" width="14" height="3" fill="#d9dbe0"/><rect x="2" y="2" width="6" height="6" fill="none" stroke="#fff"/></g>
<g id="sIo"><rect x="-8" y="-9" width="7" height="7" fill="none" stroke="#d9dbe0"/><circle cx="5" cy="-4" r="3" fill="none" stroke="#d9dbe0"/><path d="M-1 1L-5 8H3z" fill="none" stroke="#d9dbe0"/></g>
<g id="sHw"><circle r="8.500" fill="none" stroke="#e8eaee" stroke-width="1.300"/><path d="M-4 4L4-5" stroke="#e8eaee" stroke-width="1.300"/></g>
<g id="sPl"><rect x="-8" y="-9" width="14" height="18" fill="#4a7fc0"/><path d="M-8-1H6M-1-9V9" stroke="#fff"/><path d="M-8 1H2V9H-8z" fill="#e8b030"/><path d="M3 5L5 8 9 2" stroke="#4c8" stroke-width="2" fill="none"/></g>
<g id="sIm"><rect x="-8" y="-9" width="16" height="13" fill="#8d929b"/><path d="M-6 2L-3-4 0 0 3-5 6 2" stroke="#fff" fill="none"/><path d="M3 0L8 9H-2z" fill="#f2a880"/></g>
<g id="sCl"><rect x="-8" y="-8" width="16" height="16" fill="none" stroke="#d9dbe0" stroke-width="1.300"/><path d="M-5 5L-1 1M1-1L5-5M2-5H5V-2M-5 2V5H-2" stroke="#d9dbe0" fill="none"/></g>
</defs>

<rect width="1707" height="1354" fill="#3b4453"/>
<rect width="1707" height="53" fill="#232a35"/>
<rect y="52" width="1707" height="1" fill="#4a5363"/>
<rect y="53" width="1707" height="26" fill="#232a35"/>
<rect x="33" y="165" width="1638" height="1125" fill="#000"/>

<g fill="none" stroke="#a8a800"><rect x="458.500" y="169" width="787" height="1120" stroke-width="1.500"/><rect x="461.500" y="172" width="781" height="1114" stroke-width="1.500"/></g>

<text class="b" x="477" y="317" font-size="18" textLength="25" lengthAdjust="spacingAndGlyphs">A2+</text>
<text class="b" x="518" y="317" font-size="20" textLength="41" lengthAdjust="spacingAndGlyphs">1:100</text>
<text class="b" x="493" y="542" font-size="19" textLength="41" lengthAdjust="spacingAndGlyphs">墙/柱</text>
<text class="b" x="493" y="720" font-size="18" textLength="33" lengthAdjust="spacingAndGlyphs">模板</text>
<text class="b" x="493" y="898" font-size="18" textLength="49" lengthAdjust="spacingAndGlyphs">板配筋</text>
<text class="b" x="493" y="1076" font-size="18" textLength="49" lengthAdjust="spacingAndGlyphs">梁配筋</text>
<text class="b" x="988" y="347" font-size="19" textLength="14" lengthAdjust="spacingAndGlyphs">A1</text>
<text class="b" x="1029" y="347" font-size="20" textLength="40" lengthAdjust="spacingAndGlyphs">1:110</text>
<text class="b" x="972" y="695" font-size="10" textLength="14" lengthAdjust="spacingAndGlyphs">A2+</text>
<text class="b" x="994" y="695" font-size="10" textLength="16" lengthAdjust="spacingAndGlyphs">1:20</text>
<text class="b" x="1065" y="695" font-size="17" textLength="25" lengthAdjust="spacingAndGlyphs">A2+</text>
<text class="b" x="1107" y="695" font-size="20" textLength="31" lengthAdjust="spacingAndGlyphs">1:50</text>

<g>
<text class="r" x="592.700" y="336" textLength="17" lengthAdjust="spacingAndGlyphs">02</text><text class="r" x="681.400" y="336" textLength="17" lengthAdjust="spacingAndGlyphs">03</text><text class="r" x="770" y="336" textLength="17" lengthAdjust="spacingAndGlyphs">04</text><text class="r" x="859" y="336" textLength="17" lengthAdjust="spacingAndGlyphs">05</text>
<text class="r" x="592.700" y="514" textLength="17" lengthAdjust="spacingAndGlyphs">06</text><text class="r" x="681.400" y="514" textLength="17" lengthAdjust="spacingAndGlyphs">07</text><text class="r" x="770" y="514" textLength="17" lengthAdjust="spacingAndGlyphs">08</text><text class="r" x="859" y="514" textLength="17" lengthAdjust="spacingAndGlyphs">09</text><text class="r" x="948" y="514" textLength="17" lengthAdjust="spacingAndGlyphs">10</text><text class="r" x="1036.500" y="514" textLength="17" lengthAdjust="spacingAndGlyphs">11</text><text class="r" x="1125" y="514" textLength="17" lengthAdjust="spacingAndGlyphs">12</text>
<text class="r" x="592.700" y="692" textLength="17" lengthAdjust="spacingAndGlyphs">13</text><text class="r" x="681.400" y="692" textLength="17" lengthAdjust="spacingAndGlyphs">16</text><text class="r" x="770" y="692" textLength="17" lengthAdjust="spacingAndGlyphs">19</text><text class="r" x="859" y="692" textLength="17" lengthAdjust="spacingAndGlyphs">22</text>
<text class="r" x="592.700" y="870" textLength="17" lengthAdjust="spacingAndGlyphs">15</text><text class="r" x="681.400" y="870" textLength="17" lengthAdjust="spacingAndGlyphs">18</text><text class="r" x="770" y="870" textLength="17" lengthAdjust="spacingAndGlyphs">21</text><text class="r" x="859" y="870" textLength="17" lengthAdjust="spacingAndGlyphs">24</text>
<text class="r" x="592.700" y="1048" textLength="17" lengthAdjust="spacingAndGlyphs">14</text><text class="r" x="681.400" y="1048" textLength="17" lengthAdjust="spacingAndGlyphs">18</text><text class="r" x="770" y="1048" textLength="17" lengthAdjust="spacingAndGlyphs">21</text><text class="r" x="859" y="1048" textLength="17" lengthAdjust="spacingAndGlyphs">23</text>
<text class="r" x="978" y="717" textLength="17" lengthAdjust="spacingAndGlyphs">25</text><text class="r" x="1001.500" y="717" textLength="17" lengthAdjust="spacingAndGlyphs">26</text><text class="r" x="1023.500" y="717" textLength="17" lengthAdjust="spacingAndGlyphs">27</text><text class="r" x="1045.500" y="717" textLength="17" lengthAdjust="spacingAndGlyphs">28</text><text class="r" x="1079" y="717" textLength="17" lengthAdjust="spacingAndGlyphs">29</text><text class="r" x="1123" y="717" textLength="17" lengthAdjust="spacingAndGlyphs">30</text>
</g>

<use href="#s02" x="552.700" y="338.300"/><use href="#s03" x="641.400" y="338.300"/><use href="#s04" x="730" y="338.300"/><use href="#s05" x="819" y="338.300"/>
<use href="#s06" x="552.700" y="516.300"/><use href="#sW" x="641.400" y="516.300"/><use href="#s08" x="730" y="516.300"/><use href="#sW" x="819" y="516.300"/><use href="#sW" x="907.500" y="516.300"/><use href="#sW" x="996.200" y="516.300"/><use href="#s12" x="1085" y="516.300"/>
<use href="#sT1" x="552.700" y="694"/><use href="#sT2" x="641.400" y="694"/><use href="#sT3" x="730" y="694"/><use href="#sT4" x="819" y="694"/>
<use href="#sS1" x="552.700" y="872"/><use href="#sS2" x="641.400" y="872"/><use href="#sS3" x="730" y="872"/><use href="#sS4" x="819" y="872"/>
<use href="#sB1" x="552.700" y="1050.500"/><use href="#sB2" x="641.400" y="1050.500"/><use href="#sB3" x="730" y="1050.500"/><use href="#sB4" x="819" y="1050.500"/>

<g><rect x="982.500" y="355.500" width="175" height="123.500" fill="none" stroke="#3a5575" stroke-width="1.400"/><rect x="987.500" y="357.500" width="168" height="119.500" fill="none" stroke="#3a5575" stroke-width="1.400"/>
<rect x="1047" y="360" width="28" height="3" fill="#00c040"/>
<rect x="994" y="369" width="22" height="105" fill="url(#nA)"/><rect x="1004" y="369" width="12" height="105" fill="url(#nAe)"/>
<rect x="1026" y="369" width="23" height="102" fill="url(#nA)"/><rect x="1037" y="369" width="12" height="102" fill="url(#nAe)"/>
<rect x="1055" y="369" width="23" height="102" fill="url(#nA)"/><rect x="1066" y="369" width="12" height="102" fill="url(#nAe)"/>
<rect x="1086" y="369" width="26" height="92" fill="url(#nA)"/><rect x="1100" y="369" width="12" height="92" fill="url(#nAe)"/>
<rect x="1118" y="369" width="25" height="40" fill="url(#nA)"/><rect x="1131" y="369" width="12" height="40" fill="url(#nAe)"/>
<rect x="1119" y="438" width="21" height="20" fill="url(#nA)"/>
<rect x="1026" y="400" width="14" height="14" fill="#000"/><rect x="1030" y="402" width="9" height="10" fill="#0a3"/><rect x="1032" y="405" width="3" height="6" fill="#e00"/><rect x="1030" y="415" width="10" height="2" fill="#fff"/>
<rect x="1055" y="390" width="23" height="14" fill="#000"/><rect x="1055" y="392" width="8" height="5" fill="#e00"/><rect x="1064" y="394" width="11" height="8" fill="#0a3"/>
<rect x="1055" y="425" width="23" height="15" fill="#000"/><rect x="1060" y="426" width="7" height="4" fill="#e00"/><rect x="1067" y="440" width="10" height="4" fill="#e00"/>
<rect x="1055" y="458" width="24" height="8" fill="#0a3"/><rect x="1056" y="462" width="24" height="2" fill="#e00"/><rect x="1061" y="470" width="7" height="2" fill="#fff"/>
<rect x="1086" y="370" width="18" height="8" fill="#000"/><rect x="1087" y="371" width="8" height="6" fill="#074"/><rect x="1096" y="371" width="8" height="6" fill="#e00"/>
<rect x="1086" y="405" width="24" height="12" fill="#000"/><rect x="1086" y="406" width="16" height="4" fill="#0a3"/><rect x="1086" y="450" width="26" height="20" fill="#000"/><rect x="1086" y="450" width="14" height="9" fill="none" stroke="#0a3" stroke-width="2"/><rect x="1106" y="450" width="6" height="7" fill="#a33"/>
<rect x="1135" y="409" width="10" height="6" fill="#c22"/><rect x="1136" y="421" width="9" height="2" fill="#fff"/><rect x="1125" y="425" width="10" height="9" fill="#0a3"/><rect x="1125" y="435" width="10" height="2" fill="#fff"/>
<path d="M1146 476v-3h8" stroke="#fff" fill="none"/></g>

<g fill="none" stroke="#3a5575" stroke-width="1.400"><rect x="969.500" y="719.500" width="17.500" height="28"/><rect x="992.500" y="719.500" width="17.500" height="28"/><rect x="1015.500" y="719.500" width="17" height="28"/><rect x="1037.500" y="719.500" width="17" height="28"/><rect x="1059.500" y="719.500" width="41" height="71.500"/><rect x="1105.500" y="719.500" width="40" height="71.500"/></g>
<rect x="972" y="722" width="13" height="23" fill="url(#nD)"/><rect x="995" y="722" width="13" height="23" fill="url(#nD)"/><rect x="1018" y="722" width="13" height="17" fill="url(#nG)"/><rect x="1040" y="722" width="6" height="23" fill="url(#nG)"/>
<rect x="1063" y="724" width="14" height="20" fill="url(#nG)"/><rect x="1082" y="724" width="13" height="20" fill="url(#nG)"/><rect x="1063" y="754" width="14" height="20" fill="url(#nG)"/><rect x="1086" y="762" width="7" height="12" fill="#0a8"/>
<path d="M1110 722V752H1117L1127 745 1127 730 1117 722z" fill="none" stroke="#fe0" stroke-width="2"/><path d="M1115 727L1126 735M1115 738L1126 745" stroke="#ccc"/><path d="M1110 770L1120 762M1128 767L1140 759M1111 783L1122 775" stroke="#d22" stroke-width="4"/><rect x="1127" y="775" width="16" height="4" fill="#ccc"/>

<g opacity=".95"><rect x="500" y="1205" width="93" height="15" fill="#333" rx="2"/><rect x="500" y="1226" width="309" height="15" fill="#333" rx="2"/><rect x="500" y="1246" width="531" height="15" fill="#333" rx="2"/></g>
<text class="h" x="503" y="1217" textLength="87">命令: '_.zoom</text>
<text class="h" x="503" y="1237" textLength="302">指定窗口的角点, 输入比例因子 (nX 或 nXP), 或者</text>
<text class="h" x="503" y="1257" textLength="525">[全部(A)/中心(C)/动态(D)/范围(E)/上一个(P)/比例(S)/窗口(W)/对象(O)] &lt;实时&gt;: _e</text>

<path d="M33 1266.500H1671M1459 165V1290" stroke="#eee" stroke-width="1"/>
<rect x="1453.500" y="1260.500" width="11" height="12" fill="#000" stroke="#fff" stroke-width="1.400"/>

<g fill="none" stroke="#ddd"><path d="M59.500 1213V1259M65 1263.500H110"/><rect x="55.500" y="1258.500" width="9" height="9" stroke-width="1.200"/><path d="M62 1196l5 6v7M72 1196l-5 6M114 1250l12 13M126 1250l-12 13" stroke-width="1.200"/></g>

<circle cx="1588" cy="247" r="54" fill="none" stroke="#2a2a2a" stroke-width="12"/>
<rect x="1562.500" y="221.500" width="51" height="51" fill="#9b9b9b" stroke="#6a6a6a"/>
<rect x="1572" y="231" width="32" height="32" fill="#898b90"/>
<path d="M1585.500 235V256M1573 256.500H1603" stroke="#4c4c4c" stroke-width="2"/><path d="M1586 244h10M1593 255h5" stroke="#4c4c4c" stroke-width="1.500"/>
<text class="v" x="1588" y="199">北</text><text class="v" x="1588" y="312">南</text><text class="v" x="1532" y="255">西</text><text class="v" x="1644" y="255">东</text>
<rect x="1564.500" y="334.500" width="47" height="17" rx="4" fill="#787880" stroke="#8f8f96"/>
<text x="1568" y="347" font-size="12" fill="#4a4a4a">WCS</text><path d="M1599 340h9l-4.500 5z" fill="none" stroke="#9a9aa0"/>

<rect width="1707" height="1.500" fill="#0a7fc4"/>
<rect width="1.500" height="1354" fill="#0a7fc4"/><rect x="1705.500" width="1.500" height="1354" fill="#0a7fc4"/>
<path d="M15 7L36 5V24L19 27 15 24z" fill="#e0173f"/><path d="M15 7v17l4 3V10z" fill="#8f1130"/><path d="M36 5l3 3v16l-3 0z" fill="#b01233"/>
<text x="21" y="22" font-size="16" font-weight="bold" fill="#fff">A</text>
<use href="#trs" x="45" y="16"/>
<use href="#n" x="68.500" y="16"/><use href="#o" x="93" y="16"/><use href="#s" x="118" y="16"/><use href="#sa" x="141" y="16"/>
<g transform="translate(165.500 16)"><rect x="-5" y="-9" width="8" height="15" fill="#999"/><rect x="-5" y="-2" width="8" height="4" fill="#555"/><path d="M1 3h7v6H1z" fill="#f2c26a"/></g>
<g transform="translate(189 16)"><rect x="-5" y="-9" width="10" height="18" fill="#c8c8c8"/><path d="M-7-3H1V-6L5-1 1 3V1H-7z" fill="#6cb6ee"/></g>
<use href="#pr" x="213" y="16"/><use href="#un" x="237.500" y="16"/><use href="#trs" x="254" y="15"/>
<g opacity=".5"><use href="#rd" x="272.500" y="16"/><use href="#trs" x="289" y="15"/></g>
<path d="M302 13h7M302 16h7l-3.500 4z" fill="#c8c8c8" stroke="#c8c8c8" stroke-width=".6"/>
<path d="M318 15L334 7 331 26 326 20 323 24V18z" fill="#5eb0e5"/>
<text x="337" y="21" class="t" style="fill:#8cc8f0" textLength="25">共享</text>
<text class="t" x="543" y="21" textLength="143" lengthAdjust="spacingAndGlyphs">Autodesk AutoCAD 2025</text>
<text class="t" x="702" y="21" textLength="183" lengthAdjust="spacingAndGlyphs">某高层抗震墙住宅结构设计图.dwg</text>
<path d="M1065 11l5 5-5 5z" fill="#c8c8c8"/>
<rect x="1076" y="6" width="178" height="20" fill="#485163"/>
<text x="1079" y="20" font-size="12.500" font-style="italic" fill="#a9afbb" textLength="90">键入关键字或短语</text>
<circle cx="1265" cy="14" r="5" fill="none" stroke="#dfe1e6" stroke-width="1.500"/><path d="M1269 18l4 5" stroke="#d7a15a" stroke-width="2"/>
<circle cx="1290.500" cy="11" r="5" fill="#dfe1e6"/><path d="M1282 23q0-7 8.500-7t8.500 7z" fill="#dfe1e6"/>
<text class="t" x="1304" y="21" textLength="25">登录</text>
<use href="#trs" x="1391" y="16"/>
<path d="M1407 9h3l2 9h8l1-6h-10M1412 21h8" fill="none" stroke="#d0d0d0" stroke-width="1.500"/><path d="M1413 23h1M1419 23h1" stroke="#d0d0d0" stroke-width="2"/>
<path d="M1437 7l-8 17h4l2-4h5l2 4h4z" fill="#dfe1e6"/><use href="#trs" x="1452" y="16"/>
<rect x="1465" y="7" width="1" height="19" fill="#555e6e"/>
<use href="#q" x="1483" y="16"/><use href="#trs" x="1500" y="16"/>
<path d="M1585 16h11M1632 10h10v11h-10zM1678 10l11 12M1689 10l-11 12" fill="none" stroke="#e2e4e8" stroke-width="1.300"/>

<text class="m" x="18" y="47" textLength="38">文件(F)</text><text class="m" x="80" y="47" textLength="39">编辑(E)</text><text class="m" x="143" y="47" textLength="40">视图(V)</text><text class="m" x="207" y="47" textLength="36">插入(I)</text><text class="m" x="267" y="47" textLength="42">格式(O)</text><text class="m" x="333" y="47" textLength="39">工具(T)</text><text class="m" x="396" y="47" textLength="41">绘图(D)</text><text class="m" x="461" y="47" textLength="42">标注(N)</text><text class="m" x="527" y="47" textLength="44">修改(M)</text><text class="m" x="596" y="47" textLength="38">参数(P)</text><text class="m" x="658" y="47" textLength="44">窗口(W)</text><text class="m" x="726" y="47" textLength="41">帮助(H)</text><text class="m" x="791" y="47" textLength="45">Express</text>
<path d="M1618 42h10M1651 40v8h7v-8zM1653 40v-3h8v8h-3M1681 37l10 11M1691 37l-10 11" fill="none" stroke="#d8dade" stroke-width="1.200"/>

<path d="M19 61H37M19 67H37M19 73H37" stroke="#e2e4e8" stroke-width="2"/>
<path d="M50 76L54 58M340 76L344 58" stroke="#4a5363"/>
<text class="t" x="61" y="72" textLength="25" style="font-size:13px">开始</text>
<path d="M93 79L100 55H300L294 79z" fill="#3b4453"/>
<text x="110" y="72" font-size="13.500" font-weight="bold" fill="#fff" textLength="162">某高层抗震墙住宅结构设计图*</text>
<path d="M281 63l9 9M290 63l-9 9" stroke="#aab0ba" stroke-width="1.500"/>
<path d="M310 67h14M317 60v14" stroke="#e2e4e8" stroke-width="2"/>

<g fill="none" stroke="#262d38" stroke-width="1.300">
<rect x="4.500" y="83.500" width="645" height="23.500"/><rect x="651" y="83.500" width="401" height="23.500"/><rect x="4.500" y="111.500" width="639" height="22"/><rect x="647" y="111.500" width="486" height="22"/><rect x="4.500" y="137.500" width="77" height="23.500"/>
<rect x="5.500" y="165" width="23.500" height="448"/><rect x="1675.500" y="165" width="24" height="404"/></g>
<g stroke="#aab0ba" stroke-width="1.300" stroke-dasharray="1.300 1.300" fill="none"><path d="M9 87V103M11 87V103M9 115V130M11 115V130M9 141V157M11 141V157M652.500 115V130M654.500 115V130M657 87V103M659 87V103M1056 87V103M1058 87V103"/><path d="M8 168.500H26M8 170.500H26M1679 168.500H1696M1679 170.500H1696"/></g>
<g stroke="#6b7484"><path d="M85.500 86V104M182.500 86V104M301.500 86V104M382.500 86V104M478.500 86V104M625.500 86V104M109.500 114V131M206.500 114V131M327.500 114V131M734 114V131M919.500 114V131M1018.500 114V131"/></g>

<use href="#n" x="23.600" y="95"/><use href="#o" x="46.600" y="95"/><use href="#s" x="69.700" y="95"/>
<use href="#pr" x="98.700" y="95"/><use href="#pv" x="121.800" y="95"/><use href="#pl" x="144.800" y="95"/><use href="#dwf" x="167.900" y="95"/>
<use href="#cut" x="197.500" y="95"/><use href="#cp" x="219.400" y="95"/><use href="#pa" x="242.500" y="95"/><use href="#mt" x="266" y="95"/><use href="#bl" x="289" y="95"/>
<use href="#un" x="318" y="95"/><use href="#tri" x="336" y="95"/><use href="#rd" x="354" y="95"/><use href="#tri" x="371" y="95"/>
<use href="#hnd" x="395" y="95"/><use href="#zr" x="418" y="95"/><use href="#zw" x="441.600" y="95"/><use href="#zp" x="465" y="95"/>
<use href="#pro" x="493.700" y="95"/><use href="#tp" x="516.700" y="95"/><use href="#sh" x="539.800" y="95"/><use href="#ms" x="562.400" y="95"/><use href="#mk" x="585.800" y="95"/><use href="#cal" x="609" y="95"/>
<use href="#q" x="638" y="95"/><use href="#lay" x="672" y="95"/>

<rect x="683" y="84" width="300" height="22" fill="#fff"/>
<use href="#bulb" x="695" y="95"/><use href="#sun" x="711.500" y="95"/><use href="#vp" x="733" y="95"/><use href="#lck" x="752" y="95"/>
<rect x="763.500" y="88.500" width="12" height="13" fill="#fff" stroke="#333"/>
<text class="c" x="781" y="100" textLength="48">tab-表头</text>
<path d="M970 92l4.500 4.500 4.500-4.500" fill="none" stroke="#666" stroke-width="1.200"/>
<use href="#lyb" x="994" y="95"/><use href="#lyp" x="1018" y="95"/><use href="#lay" x="1039" y="95"/>
<rect x="1062" y="84" width="150" height="22" fill="#fff"/><rect x="1066.500" y="88.500" width="13" height="13" fill="#fff" stroke="#444"/><text class="c" x="1084" y="100" textLength="45">ByLayer</text><path d="M1199 92l4.500 4.500 4.500-4.500" fill="none" stroke="#666"/>
<rect x="1218" y="84" width="160" height="22" fill="#fff"/><path d="M1223 95h60" stroke="#000" stroke-width="1.300"/><text class="c" x="1288" y="100" textLength="45">ByLayer</text><path d="M1365 92l4.500 4.500 4.500-4.500" fill="none" stroke="#666"/>
<rect x="1384" y="84" width="124" height="22" fill="#fff"/><path d="M1389 94h35" stroke="#000" stroke-width="1.300"/><text class="c" x="1429" y="100" textLength="45">ByLayer</text><path d="M1496 92l4.500 4.500 4.500-4.500" fill="none" stroke="#666"/>
<rect x="1515" y="84" width="120" height="22" fill="#f2f2f2"/><text class="c" x="1525" y="99" textLength="46" style="fill:#999">ByColor</text><path d="M1621 92l4.500 4.500 4.500-4.500" fill="none" stroke="#bbb"/>

<use href="#dlin" x="24.700" y="122"/><use href="#dal" x="46.600" y="122"/><use href="#darc" x="70" y="122"/><use href="#dor" x="92" y="122"/>
<use href="#drad" x="121.800" y="122"/><use href="#djog" x="145" y="122"/><use href="#ddia" x="167.300" y="122"/><use href="#dang" x="190" y="122"/>
<use href="#dqk" x="219.400" y="122"/><use href="#dbas" x="242.500" y="122"/><use href="#dcon" x="265.500" y="122"/><use href="#dsp" x="289" y="122"/><use href="#dbk" x="311.600" y="122"/>
<use href="#dtol" x="340.600" y="122"/><use href="#dcm" x="363.700" y="122"/><use href="#din" x="387.300" y="122"/><use href="#djl" x="409.700" y="122"/>
<use href="#ded" x="438.800" y="122"/><use href="#dA" x="462.400" y="122"/><use href="#drg" x="485.500" y="122"/>
<rect x="503" y="112" width="120" height="21" fill="#fff"/>
<svg x="522" y="112" width="81" height="21"><text class="c" x="0" y="16" textLength="92" lengthAdjust="spacingAndGlyphs">TCCAD_25_100</text></svg>
<path d="M610 120l4 4 4-4" fill="none" stroke="#666"/>
<use href="#dst" x="634.700" y="122"/>
<use href="#u3" x="668" y="122"/><use href="#u4" x="690" y="122"/><use href="#u5" x="713" y="122"/>
<use href="#u6" x="741.600" y="122"/><use href="#u7" x="764" y="122"/><use href="#u8" x="788" y="122"/><use href="#u9" x="812" y="122"/><use href="#u10" x="835" y="122"/><use href="#u11" x="858" y="122"/><use href="#u12" x="879" y="122"/><use href="#u13" x="902" y="122"/>
<use href="#u14" x="931" y="122"/><use href="#u15" x="955" y="122"/><use href="#u16" x="978" y="122"/><use href="#u13" x="1000" y="122"/>
<use href="#u17" x="1032" y="122"/><use href="#u18" x="1053" y="122"/><use href="#u19" x="1075" y="122"/><use href="#u20" x="1099" y="122"/><use href="#u21" x="1123" y="122"/>

<g transform="translate(23.600 149)"><use href="#edb"/><path d="M0 2L6-8l3 2L3 4z" fill="#f2b45c"/></g>
<g transform="translate(46.600 149)"><use href="#edb"/><path d="M-2-4L1-1 7-8" fill="none" stroke="#4c8" stroke-width="2.200"/></g>
<g transform="translate(70 149)"><path d="M-9 0L0-8H8L-1 0z" fill="#9a9a9a"/><path d="M-9 3L0-5H8L-1 3z" fill="#d0d0d0"/><path d="M-9 6H0" stroke="#ccc" stroke-width="2"/><rect x="2" y="0" width="7" height="10" fill="#ee7a80"/></g>

<use href="#L1" x="16" y="184"/><use href="#L2" x="16" y="207"/><use href="#L3" x="16" y="228"/><use href="#L4" x="16" y="251"/><use href="#L5" x="16" y="273"/><use href="#L6" x="16" y="295"/><use href="#L7" x="16" y="317"/><use href="#L8" x="16" y="339"/><use href="#L9" x="16" y="361"/><use href="#L10" x="16" y="383"/><use href="#L11" x="16" y="404"/><use href="#L12" x="16" y="427"/><use href="#L13" x="16" y="448"/><use href="#L14" x="16" y="471"/><use href="#L15" x="16" y="493"/><use href="#L16" x="16" y="515"/><use href="#L17" x="16" y="537"/><use href="#L18" x="16" y="559"/><use href="#L19" x="16" y="581"/><use href="#L20" x="16" y="603"/>

<g transform="translate(1687 0)"><use href="#R1" y="185"/><use href="#R2" y="207"/><use href="#R3" y="230"/><use href="#R4" y="251"/><use href="#R5" y="273"/><use href="#R6" y="295"/><use href="#R7" y="317"/><use href="#R8" y="339"/><use href="#R9" y="361"/><use href="#R10" y="383"/><use href="#R11" y="405"/><use href="#R12" y="427"/><use href="#R13" y="448"/><use href="#R14" y="471"/><use href="#R15" y="493"/><use href="#R16" y="515"/><use href="#R17" y="537"/><use href="#R18" y="559"/></g>

<rect x="436" y="1263" width="58" height="27" fill="#2b323d" rx="2"/>
<rect x="494" y="1264" width="774" height="26" fill="#b3b3b3"/>
<path d="M494 1266.500H1268" stroke="#fff" stroke-width="1.300"/>
<path d="M494 1282.500H1240M494 1287.500H1246M1240 1264V1283M1246 1264V1288" fill="none" stroke="#e8e8b0" stroke-width="1.400"/>
<g stroke="#aab0ba" stroke-width="1.300" stroke-dasharray="1.300 1.300"><path d="M441 1268V1286M443.500 1268V1286"/></g>
<path d="M454 1272l8 8M462 1272l-8 8" stroke="#9aa0aa" stroke-width="1.500"/>
<path d="M473 1286l7-10" stroke="#d0d0d0" stroke-width="3"/><path d="M481 1270q-3 3 0 6 4 1 5-4l-2 2-2-2z" fill="#d0d0d0"/>
<rect x="499" y="1271" width="15" height="12" fill="#b3b3b3" stroke="#333"/><rect x="499" y="1271" width="15" height="3" fill="#555"/><path d="M501 1277l2 1-2 1M505 1280h3" stroke="#333" fill="none"/>
<path d="M516 1275h7l-3.500 4z" fill="#444"/>
<text x="532" y="1281" font-size="13" font-style="italic" fill="#6f6f6f" textLength="55">键入命令</text>
<path d="M1256 1280h8l-4-6z" fill="#444"/>

<rect y="1293" width="1707" height="61" fill="#232a35"/>
<rect width="1.500" y="1293" height="61" fill="#0a7fc4"/><rect x="1705.500" y="1293" width="1.500" height="61" fill="#0a7fc4"/>
<rect y="1352" width="1707" height="2" fill="#0a7fc4"/>
<path d="M19 1300H37M19 1306H37M19 1312H37" stroke="#e2e4e8" stroke-width="2"/>
<path d="M45 1318L54 1294H102L94 1318z" fill="#3b4453"/>
<text x="61" y="1311" font-size="13" font-weight="bold" fill="#fff" textLength="25">模型</text>
<text x="110" y="1311" font-size="13" fill="#e2e4e8" textLength="30">布局1</text>
<path d="M150 1317L156 1296M192 1317L198 1296" stroke="#4a5363"/>
<path d="M166 1306h14M173 1299v14" stroke="#e2e4e8" stroke-width="2"/>

<g fill="#3b4453"><rect x="6" y="1324" width="387" height="24"/><rect x="395" y="1324" width="211" height="24"/><rect x="609" y="1324" width="31" height="24"/><rect x="642" y="1324" width="63" height="24"/><rect x="709" y="1324" width="219" height="24"/><rect x="930" y="1324" width="114" height="24"/><rect x="1047" y="1324" width="103" height="24"/><rect x="1154" y="1324" width="146" height="24"/><rect x="1303" y="1324" width="39" height="24"/><rect x="1344" y="1324" width="24" height="24"/><rect x="1371" y="1324" width="97" height="24"/><rect x="1469" y="1324" width="24" height="24"/><rect x="1496" y="1324" width="39" height="24"/><rect x="1537" y="1324" width="25" height="24"/><rect x="1564" y="1324" width="25" height="24"/><rect x="1591" y="1324" width="58" height="24"/><rect x="1651" y="1324" width="24" height="24"/><rect x="1676" y="1324" width="26" height="24"/></g>
<g fill="#6591c4"><rect x="735" y="1325" width="22" height="22"/><rect x="760" y="1325" width="22" height="22"/><rect x="890" y="1325" width="21" height="22"/><rect x="955" y="1325" width="23" height="22"/><rect x="1048" y="1325" width="23" height="22"/><rect x="1112" y="1325" width="22" height="22"/><rect x="1155" y="1325" width="22" height="22"/><rect x="1565" y="1325" width="24" height="22"/></g>
<text class="st" x="409" y="1341" textLength="192" lengthAdjust="spacingAndGlyphs">464875.9201, -295171.5907, 0.0000</text>
<text class="st" x="612" y="1341" textLength="25">模型</text>
<use href="#sg" x="654" y="1336"/><use href="#sd" x="677" y="1335"/><use href="#trs" x="698" y="1336"/>
<use href="#sI" x="721" y="1336"/><use href="#sS" x="746" y="1336"/><use href="#sO" x="771" y="1336"/><use href="#sP" x="795" y="1336"/><use href="#trs" x="815" y="1336"/><use href="#sIs" x="835.500" y="1336"/><use href="#trs" x="855" y="1336"/>
<use href="#sAn" x="876" y="1336"/><use href="#sOs" x="900" y="1336"/><use href="#trs" x="920.500" y="1336"/>
<use href="#sLw" x="941" y="1336"/><use href="#sTr" x="967" y="1336"/><use href="#sC" x="991" y="1336"/><use href="#s3" x="1017" y="1336"/><use href="#trs" x="1035.500" y="1336"/>
<use href="#sU" x="1059" y="1336"/><use href="#sD" x="1082.500" y="1336"/><use href="#trs" x="1103" y="1336"/><use href="#sG" x="1123" y="1336"/><use href="#trs" x="1142" y="1336"/>
<use href="#sAa" x="1166" y="1336"/><use href="#sAb" x="1190.500" y="1336"/><use href="#sAc" x="1214" y="1336"/>
<text class="st" x="1231" y="1341" textLength="53" lengthAdjust="spacingAndGlyphs">1:1 / 100%</text><use href="#trs" x="1292" y="1336"/>
<use href="#sGe" x="1315" y="1336"/><use href="#trs" x="1335" y="1336"/>
<path d="M1347 1336h16M1355 1328v16" stroke="#d9dbe0" stroke-width="1.800"/>
<use href="#sRu" x="1383" y="1336"/>
<text class="st" x="1400" y="1341" textLength="25">小数</text><use href="#trs" x="1460" y="1336"/>
<use href="#sQp" x="1481" y="1336"/><use href="#sWs" x="1507" y="1336"/><use href="#trs" x="1528" y="1336"/><use href="#sIo" x="1549" y="1336"/>
<use href="#sHw" x="1576.500" y="1336"/><use href="#sPl" x="1604" y="1336"/><use href="#sIm" x="1635" y="1336"/><use href="#sCl" x="1663" y="1336"/>
<path d="M1681 1329h16M1681 1336h16M1681 1343h16" stroke="#e2e4e8" stroke-width="2"/>
</svg>
</body></html>
